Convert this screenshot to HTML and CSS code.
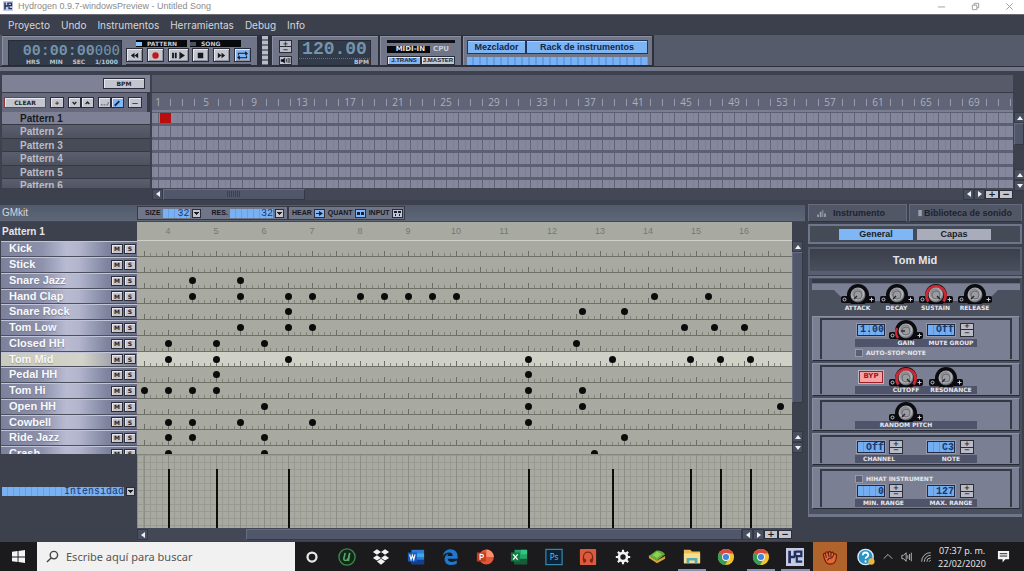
FILE: index.html
```html
<!DOCTYPE html>
<html lang="es">
<head>
<meta charset="utf-8">
<title>Hydrogen</title>
<link rel="stylesheet" href="styles.css">
</head>
<body>
<svg class="defs" aria-hidden="true">
  <defs>
    <radialGradient id="metal" cx="0.45" cy="0.4" r="0.6">
      <stop offset="0" stop-color="#c9cbd0"/><stop offset="0.45" stop-color="#85878d"/><stop offset="0.7" stop-color="#b4b6bb"/><stop offset="1" stop-color="#4a4c53"/>
    </radialGradient>
    <symbol id="feet" viewBox="0 0 34 20">
      <rect x="0" y="12" width="34" height="7" rx="2" fill="#0b0b10"/>
      <circle cx="17" cy="11" r="11" fill="#0b0b10"/>
      <circle cx="3.5" cy="15.5" r="1.5" fill="none" stroke="#c8cad2"/>
      <path d="M30.500 13.500v4M28.500 15.500h4" stroke="#c8cad2"/>
    </symbol>
    <symbol id="cap" viewBox="0 0 34 20">
      <circle cx="17" cy="11" r="7.500" fill="url(#metal)"/>
      <circle cx="17" cy="11" r="4" fill="#9a9ca2" stroke="#6a6c73"/>
    </symbol>
    <symbol id="knob" viewBox="0 0 34 20"><use href="#feet"/><use href="#cap"/><path d="M16 12l-3 3" stroke="#26272d" stroke-width="1.500"/></symbol>
    <symbol id="knob-low" viewBox="0 0 34 20"><use href="#feet"/><path d="M9 18A10 10 0 0 1 8 8" fill="none" stroke="#c62a35" stroke-width="2.500"/><use href="#cap"/><path d="M12 11h4" stroke="#26272d" stroke-width="1.500"/></symbol>
    <symbol id="knob-red" viewBox="0 0 34 20"><use href="#feet"/><path d="M9.500 17.500A9.500 9.500 0 1 1 24.500 17.500" fill="none" stroke="#c62a35" stroke-width="3"/><use href="#cap"/><path d="M18 12l3 3" stroke="#26272d" stroke-width="1.500"/></symbol>
    <symbol id="chrome" viewBox="0 0 20 20">
      <circle cx="10" cy="10" r="9" fill="#f2c230"/>
      <path d="M10 10L2.200 5.500A9 9 0 0 1 18 6H10z" fill="#dc4a3d"/>
      <path d="M10 10L2.200 5.500A9 9 0 0 0 9 19l4-7z" fill="#3a9b57"/>
      <circle cx="10" cy="10" r="4.400" fill="#f3f3f3"/><circle cx="10" cy="10" r="3.400" fill="#4285d8"/>
    </symbol>
    <symbol id="h2" viewBox="0 0 20 20">
      <rect width="20" height="20" fill="#c5cbe6"/><path d="M4 3v14M4 10h6M10 3v7" stroke="#23305e" stroke-width="3" fill="none"/><path d="M11 4h6v5h-5v6h6" stroke="#23305e" stroke-width="2.500" fill="none"/>
    </symbol>
  </defs>
</svg>

<header class="titlebar">
  <svg class="app-icon" viewBox="0 0 20 20"><use href="#h2"/></svg>
  <h1>Hydrogen 0.9.7-windowsPreview - Untitled Song</h1>
  <div class="window-buttons">
    <button aria-label="Minimizar"><svg viewBox="0 0 10 10"><path d="M1 5.500h8"/></svg></button>
    <button aria-label="Restaurar"><svg viewBox="0 0 10 10"><path d="M1.500 3.500h5v5h-5zM3.500 3.500v-2h5v5h-2"/></svg></button>
    <button aria-label="Cerrar"><svg viewBox="0 0 10 10"><path d="M1.500 1.500l7 7M8.500 1.500l-7 7"/></svg></button>
  </div>
</header>

<nav class="menu">
  <a href="#">Proyecto</a><a href="#">Undo</a><a href="#">Instrumentos</a><a href="#">Herramientas</a><a href="#">Debug</a><a href="#">Info</a>
</nav>

<section class="toolbar">
  <div class="tool transport">
    <div class="clock">
      <div class="clock-digits">00:00:00<small>000</small></div>
      <div class="clock-units"><span>HRS</span><span>MIN</span><span>SEC</span><span>1/1000</span></div>
    </div>
    <div class="transport-main">
      <div class="modes"><button class="mode on"><i></i>PATTERN</button><button class="mode"><i></i>SONG</button></div>
      <div class="keys">
        <button class="key" aria-label="Rebobinar"><svg viewBox="0 0 16 12"><path d="M8 3v6L4 6zM12 3v6L8 6z"/></svg></button>
        <button class="key" aria-label="Grabar"><svg viewBox="0 0 16 12"><circle cx="8" cy="6" r="3.500" fill="#c4161c"/></svg></button>
        <button class="key wide" aria-label="Reproducir"><svg viewBox="0 0 16 12"><path d="M1 3h2v6H1zM4 3h2v6H4zM9 2v8l6-4z"/></svg></button>
        <button class="key" aria-label="Detener"><svg viewBox="0 0 16 12"><path d="M5 3h6v6H5z"/></svg></button>
        <button class="key" aria-label="Avanzar"><svg viewBox="0 0 16 12"><path d="M4 3v6l4-3zM8 3v6l4-3z"/></svg></button>
        <button class="key blue" aria-label="Repetir"><svg viewBox="0 0 16 12"><path d="M3 6V3h8V1l3 3-3 2V4H4v2zM13 6v3H5v2L2 8l3-2v2h7V6z"/></svg></button>
      </div>
    </div>
  </div>
  <div class="meter"></div>
  <div class="tool tempo">
    <div class="tempo-buttons">
      <div class="spin"><button aria-label="Subir tempo">+</button><button aria-label="Bajar tempo">−</button></div>
      <button class="metronome" aria-label="Metrónomo"><svg viewBox="0 0 12 8"><path d="M1 3h2l2-2v6L3 5H1zM7 2v4M9 1v6M11 1v6" stroke="#23252e"/></svg></button>
    </div>
    <div class="clock bpm"><div class="bpm-digits">120.00</div><div class="clock-units end"><span>BPM</span></div></div>
  </div>
  <div class="tool status">
    <div class="cpu-bar"></div>
    <div class="status-row"><span class="midi">MIDI-IN</span><span class="cpu">CPU</span></div>
    <div class="status-row"><button class="mini blue">J.TRANS</button><button class="mini">J.MASTER</button></div>
  </div>
  <div class="tool views">
    <div class="view-row"><button>Mezclador</button><button>Rack de instrumentos</button></div>
    <div class="lcd-strip"></div>
  </div>
</section>

<section class="song">
  <div class="song-side">
    <div class="song-bpm"><button class="mini">BPM</button></div>
    <div class="song-tools">
      <button class="mini clear">CLEAR</button><button class="mini">+</button>
      <span class="pair"><button class="mini" aria-label="Bajar patrón"><svg viewBox="0 0 12 8"><path d="M4 3l2 2 2-2" fill="none" stroke="#22242c" stroke-width="1.500"/></svg></button><button class="mini" aria-label="Subir patrón"><svg viewBox="0 0 12 8"><path d="M4 5l2-2 2 2" fill="none" stroke="#22242c" stroke-width="1.500"/></svg></button></span>
      <span class="pair"><button class="mini" aria-label="Seleccionar"><svg viewBox="0 0 12 8"><path d="M2 6h8V3" fill="none" stroke="#555862" stroke-dasharray="2 1"/></svg></button><button class="mini blue" aria-label="Dibujar"><svg viewBox="0 0 12 8"><path d="M3 7l5-5" stroke="#102a66" stroke-width="2"/></svg></button></span>
      <button class="mini">—</button>
    </div>
    <ul class="pattern-list">
      <li class="selected">Pattern 1</li><li>Pattern 2</li><li>Pattern 3</li><li>Pattern 4</li><li>Pattern 5</li><li>Pattern 6</li>
    </ul>
  </div>
  <div class="song-main">
    <div class="song-tempo"></div>
    <div class="song-ruler" id="songRuler"></div>
    <div class="song-grid"><div class="song-lane"><i class="block"></i></div><div class="song-lane"></div><div class="song-lane"></div><div class="song-lane"></div><div class="song-lane"></div><div class="song-lane"></div></div>
    <div class="hscroll">
      <button class="arrow left" aria-label="Izquierda"></button><div class="thumb song-thumb"></div><span class="fill"></span>
      <button class="arrow left" aria-label="Izquierda"></button><button class="arrow right" aria-label="Derecha"></button><button class="zoom-button">+</button><button class="zoom-button">−</button>
    </div>
  </div>
  <div class="vscroll song-v">
    <button class="arrow up" aria-label="Subir"></button><div class="thumb"></div><span class="fill"></span><button class="arrow up" aria-label="Subir"></button><button class="arrow down" aria-label="Bajar"></button>
  </div>
</section>

<main class="workspace">
  <section class="pattern">
    <div class="pattern-head">
      <span class="kit">GMkit</span>
      <div class="pattern-tools">
        <label for="size">SIZE</label><span class="drop"><select id="size"><option>32</option></select></span>
        <label for="res" class="res">RES.</label><span class="drop drop-wide"><select id="res"><option>32</option></select></span>
        <span class="toggle first">HEAR<button class="tiny blue" aria-label="Hear"><svg viewBox="0 0 9 7"><path d="M1 3h3V1l4 2.500L4 6V4H1z"/></svg></button></span>
        <span class="toggle">QUANT<button class="tiny blue" aria-label="Quant"><svg viewBox="0 0 9 7"><path d="M1 2h3v3H1zM5 2h3v3H5z"/></svg></button></span>
        <span class="toggle">INPUT<button class="tiny" aria-label="Input"><svg viewBox="0 0 9 7"><path d="M1 1h3v2H1zM5 1h3v2H5zM2 4h1v2H2zM6 4h1v2H6z"/></svg></button></span>
      </div>
    </div>
    <div class="pattern-body">
      <div class="pattern-side">
        <h2>Pattern 1</h2>
        <ul class="instruments" id="instruments"></ul>
        <div class="property"><span class="drop drop-full"><select aria-label="Propiedad"><option>Intensidad</option></select></span></div>
      </div>
      <div class="pattern-main">
        <div class="beat-ruler" id="beatRuler"></div>
        <div class="lanes" id="lanes"></div>
        <div class="velocity" id="velocity"></div>
        <div class="hscroll">
          <button class="arrow left" aria-label="Izquierda"></button><span class="gap"></span><div class="thumb fill"></div>
          <button class="arrow left" aria-label="Izquierda"></button><button class="arrow right" aria-label="Derecha"></button><button class="zoom-button">+</button><button class="zoom-button">−</button>
        </div>
      </div>
      <div class="vscroll pattern-v">
        <button class="arrow up" aria-label="Subir"></button><div class="thumb fill"></div><span class="gap"></span><button class="arrow up" aria-label="Subir"></button><button class="arrow down" aria-label="Bajar"></button>
      </div>
    </div>
  </section>

  <aside class="rack">
    <div class="tabs">
      <button class="tab"><svg viewBox="0 0 10 8"><path d="M0 8V5h2v3zM3 8V2h2v6zM6 8V0h1v8zM8 8V4h2v4z"/></svg>Instrumento</button>
      <button class="tab"><svg viewBox="0 0 5 8"><path d="M0 0h4v7H0z"/></svg>Biblioteca de sonido</button>
    </div>
    <div class="subtabs"><button class="active">General</button><button>Capas</button></div>
    <h2 class="instrument-name">Tom Mid</h2>
    <div class="editor">
      <div class="rail"></div>
      <div class="adsr">
        <label class="dial"><svg><use href="#knob"/></svg><input type="range"><span>ATTACK</span></label>
        <label class="dial"><svg><use href="#knob"/></svg><input type="range"><span>DECAY</span></label>
        <label class="dial"><svg><use href="#knob-red"/></svg><input type="range"><span>SUSTAIN</span></label>
        <label class="dial"><svg><use href="#knob"/></svg><input type="range"><span>RELEASE</span></label>
      </div>
      <div class="group"><div class="group-in">
        <div class="controls">
          <input class="lcd" aria-label="Gain" value="1.00">
          <label class="dial"><svg><use href="#knob-low"/></svg><input type="range" aria-label="Gain"></label>
          <input class="lcd" aria-label="Mute group" value="Off">
          <div class="spin"><button aria-label="Más">+</button><button aria-label="Menos">−</button></div>
        </div>
        <div class="band"><span class="b">GAIN</span><span class="c">MUTE GROUP</span></div>
        <label class="check"><input type="checkbox">AUTO-STOP-NOTE</label>
      </div></div>
      <div class="group"><div class="group-in">
        <div class="controls">
          <button class="byp">BYP</button>
          <label class="dial"><svg><use href="#knob-red"/></svg><input type="range" aria-label="Cutoff"></label>
          <label class="dial reso"><svg><use href="#knob"/></svg><input type="range" aria-label="Resonance"></label>
        </div>
        <div class="band"><span class="b">CUTOFF</span><span class="c">RESONANCE</span></div>
      </div></div>
      <div class="group"><div class="group-in">
        <div class="controls"><label class="dial second"><svg><use href="#knob"/></svg><input type="range" aria-label="Random pitch"></label></div>
        <div class="band"><span class="b">RANDOM PITCH</span></div>
      </div></div>
      <div class="group"><div class="group-in roomy">
        <div class="controls">
          <input class="lcd" aria-label="Channel" value="Off"><div class="spin near"><button aria-label="Más">+</button><button aria-label="Menos">−</button></div>
          <input class="lcd" aria-label="Note" value="C3"><div class="spin"><button aria-label="Más">+</button><button aria-label="Menos">−</button></div>
        </div>
        <div class="band"><span class="a">CHANNEL</span><span class="c">NOTE</span></div>
      </div></div>
      <div class="group"><div class="group-in roomy">
        <label class="check"><input type="checkbox">HIHAT INSTRUMENT</label>
        <div class="controls">
          <input class="lcd" aria-label="Min. range" value="0"><div class="spin near"><button aria-label="Más">+</button><button aria-label="Menos">−</button></div>
          <input class="lcd" aria-label="Max. range" value="127"><div class="spin"><button aria-label="Más">+</button><button aria-label="Menos">−</button></div>
        </div>
        <div class="band"><span class="a">MIN. RANGE</span><span class="c">MAX. RANGE</span></div>
      </div></div>
    </div>
  </aside>
</main>

<footer class="taskbar">
  <button class="start" aria-label="Inicio"><svg viewBox="0 0 14 14"><path d="M0 2l6-1v6H0zM7 1l7-1v7H7zM0 8h6v5l-6-1zM7 8h7v6l-7-1z" fill="#f4f4f4"/></svg></button>
  <label class="search"><svg viewBox="0 0 14 14"><circle cx="8.500" cy="5.500" r="4"/><path d="M5.500 8.500L1 13"/></svg><input type="text" placeholder="Escribe aquí para buscar" aria-label="Buscar"></label>
  <div class="apps">
    <button aria-label="Cortana"><svg viewBox="0 0 20 20"><circle cx="10" cy="10" r="5" fill="none" stroke="#e8e8e8" stroke-width="2.500"/></svg></button>
    <button aria-label="uTorrent"><svg viewBox="0 0 20 20"><circle cx="10" cy="10" r="9" fill="#12281a" stroke="#3d8a4a" stroke-width="1.500"/><path d="M8 5.500l-1.500 6c-.5 3.500 4 3 5 0l1.500-6-1.500 9" fill="none" stroke="#58a862" stroke-width="1.800"/></svg></button>
    <button aria-label="Dropbox"><svg viewBox="0 0 20 20"><path d="M5.500 1.500L10 4.500 5.500 7.500 1 4.500zM14.500 1.500L19 4.500l-4.500 3L10 4.500zM5.500 8L10 11l-4.500 3L1 11zM14.500 8L19 11l-4.500 3L10 11zM10 12l4.500 3-4.500 3.500L5.500 15z" fill="#f2f2f2"/></svg></button>
    <button aria-label="Word"><svg viewBox="0 0 20 20"><path d="M5 2h14v16H5z" fill="#2b7cd3"/><path d="M5 6h14v4H5z" fill="#41a5ee"/><path d="M5 13h14v5H5z" fill="#103f91"/><path d="M1 5h10v10H1z" fill="#185abd"/><path d="M3 7l1.500 6L6 8l1.500 5L9 7" fill="none" stroke="#fff" stroke-width="1.200"/></svg></button>
    <button aria-label="Edge"><svg viewBox="0 0 20 20"><path d="M2 9C3 4 6 1.500 10.500 1.500c5 0 8 3.500 8 8V12H7.500c.3 4 6 4.500 10 2v3.500c-6 3-13.500 1.500-13.500-5C4 9 6 7 8.500 6 7.600 7 7.300 8 7.200 9H13c0-3-1.500-4-4-4C6 5 3.500 6.500 2 9z" fill="#1f78d0"/></svg></button>
    <button aria-label="PowerPoint"><svg viewBox="0 0 20 20"><circle cx="11.500" cy="10" r="8.300" fill="#e2573a"/><path d="M11.500 1.700A8.300 8.300 0 0 1 19.800 10h-8.300z" fill="#ff8f6b"/><path d="M1 5h10v10H1z" fill="#c43e1c"/><path d="M4.500 13V7H6.500a1.700 1.700 0 0 1 0 3.500h-2" fill="none" stroke="#fff" stroke-width="1.300"/></svg></button>
    <button aria-label="Excel"><svg viewBox="0 0 20 20"><path d="M5 2h14v16H5z" fill="#21a366"/><path d="M12 2h7v5h-7z" fill="#33c481"/><path d="M5 12h14v6H5z" fill="#185c37"/><path d="M1 5h10v10H1z" fill="#107c41"/><path d="M3.500 7l5 6M8.500 7l-5 6" stroke="#fff" stroke-width="1.400"/></svg></button>
    <button aria-label="Photoshop"><svg viewBox="0 0 20 20"><rect x="1" y="1.500" width="18" height="17" fill="#0b2538" stroke="#3c93bd" stroke-width="1.200"/><text x="10" y="13.500" class="ps">Ps</text></svg></button>
    <button aria-label="Audio"><svg viewBox="0 0 20 20"><rect x="1" y="1" width="18" height="18" rx="1" fill="#dc5a3d"/><path d="M5 13V9.500a5 5 0 0 1 10 0V13" fill="none" stroke="#7c2418" stroke-width="1.300"/><path d="M4 12c2-1 4 0 4 2s-2 3-3 2zM16 12c-2-1-4 0-4 2s2 3 3 2z" fill="#7c2418"/></svg></button>
    <button aria-label="Configuración"><svg viewBox="0 0 20 20"><circle cx="10" cy="10" r="4.500" fill="none" stroke="#f2f2f2" stroke-width="3"/><path d="M10 2v3M10 15v3M2 10h3M15 10h3M4.300 4.300l2.200 2.200M13.500 13.500l2.200 2.200M4.300 15.700l2.200-2.200M13.500 6.500l2.200-2.200" stroke="#f2f2f2" stroke-width="2.400"/></svg></button>
    <button aria-label="BlueStacks"><svg viewBox="0 0 20 20"><path d="M1 11l9 6 9-5v-3l-9 5-9-6z" fill="#d8a33a"/><path d="M1 9l8-6c3-1 8 1 10 4l-9 7z" fill="#5faf3c"/><path d="M5 8l5-4 5 3-5 4z" fill="#8fd34b"/></svg></button>
    <button class="open" aria-label="Explorador"><svg viewBox="0 0 20 20"><path d="M1 2h7l2 2h9v13H1z" fill="#e9bf55"/><path d="M1 6h18v11H1z" fill="#f8df8d"/><path d="M4 17v-6h12v6h-3v-3H7v3z" fill="#5aa9b8"/></svg></button>
    <button aria-label="Chrome"><svg><use href="#chrome"/></svg></button>
    <button class="open" aria-label="Chrome"><svg><use href="#chrome"/></svg></button>
    <button class="open" aria-label="Hydrogen"><svg><use href="#h2"/></svg></button>
    <button class="alert" aria-label="Aplicación"><svg viewBox="0 0 20 20"><path d="M3 9c-1-3 1-4 2-2 0-3 2-4 3-1 1-3 3-3 3 0 1-2 3-2 3 1 2-1 4 0 3 3 0 5-3 8-7 8s-6-4-7-9z" fill="#e56a32" stroke="#6b1d12" stroke-width="1.300"/><path d="M5 7l1 4M8 6l1 4M11 6v4M14 8l-2 3c-3 0-4 1-5 3" fill="none" stroke="#6b1d12" stroke-width="1.200"/></svg></button>
  </div>
  <div class="tray">
    <svg class="help" viewBox="0 0 20 20"><circle cx="9.500" cy="10" r="8.500" fill="#2c93c8" stroke="#d6eef8" stroke-width="1.500"/><path d="M6.500 8c0-4 6-4 6 0 0 2-3 2-3 4M9.500 14v2" fill="none" stroke="#fff" stroke-width="2"/><circle cx="16" cy="15" r="3.500" fill="#e8b93c"/></svg>
    <svg viewBox="0 0 14 14"><path d="M2 9l5-5 5 5"/></svg>
    <svg viewBox="0 0 14 14"><path d="M1 5h2l3-3v10L3 9H1zM8 5v4M10 3.500v7M12 2v10"/></svg>
    <svg viewBox="0 0 14 14"><path d="M2 12.500A10 10 0 0 1 12.500 2M5 12.500A7.500 7.500 0 0 1 12.500 5M8 12.500A4.500 4.500 0 0 1 12.500 8M10.500 12.500l2-2"/></svg>
    <div class="time"><span>07:37 p. m.</span><span>22/02/2020</span></div>
    <svg class="notice" viewBox="0 0 14 14"><path d="M1 1h12v9H9l-3 3.500V10H1z"/><path class="ink" d="M3 4h8M3 6.500h8"/></svg>
  </div>
</footer>
<script src="app.js"></script>
</body>
</html>
```

FILE: styles.css
```css
* { box-sizing: border-box; }
body {
  margin: 0; min-height: 100vh; display: flex; flex-direction: column;
  background: #3d414d; color: #e4e5ea; overflow: hidden;
  font: 10px/12px "Liberation Sans", sans-serif;
}
button, input, select { font: inherit; color: inherit; margin: 0; padding: 0; border: 0; border-radius: 0; background: none; }
button { display: flex; align-items: center; justify-content: center; }
h1, h2, ul { margin: 0; padding: 0; font-size: inherit; list-style: none; }
.defs { position: absolute; width: 0; height: 0; }
.fill { flex: 1; }

/* Title and menu */
.titlebar { height: 14px; display: flex; align-items: center; gap: 5px; padding: 0 0 2px 3px; background: #fff; color: #8c8c8c; }
.titlebar h1 { flex: 1; font: 9px/11px "Liberation Sans", sans-serif; }
.app-icon { width: 10px; height: 10px; }
.window-buttons { display: flex; gap: 25px; padding-right: 10px; }
.window-buttons svg { width: 9px; height: 9px; fill: none; stroke: #999; display: block; }
.menu { height: 21px; display: flex; align-items: center; gap: 11px; padding: 0 8px 1px; background: #3c404c; border-top: 1px solid #6a6c76; font-family: Inter, sans-serif; }
.menu a { color: #d5d6dc; text-decoration: none; }

/* Toolbar */
.toolbar { height: 36px; display: flex; padding: 0 0 1px 2px; background: #565b6b; border-bottom: 4px solid #717689; box-shadow: inset 0 -1px #2d303a; }
.tool { display: flex; background: #717588; border: solid #2d303b; border-width: 1px 2px 1px 0; box-shadow: inset 1px 1px #8b8fa2; }
.transport { width: 257px; padding: 4px 6px 0; gap: 4px; }
.clock { width: 114px; height: 26px; background: #323b49; border: 1px solid #262b35; display: flex; flex-direction: column; justify-content: space-between; color: #7494ab; }
.clock-digits { padding-top: 2px; text-align: right; font: bold 15px/15px "Liberation Mono", monospace; white-space: nowrap; }
.clock-digits small { font: 14px/15px "DejaVu Sans Mono", monospace; padding-right: 1px; }
.clock-units { display: flex; justify-content: space-between; padding: 0 3px 0 17px; font: bold 6px/6px "DejaVu Sans", sans-serif; color: #b8c4d0; }
.clock-units.end { justify-content: flex-end; padding-right: 1px; }
.transport-main { flex: 1; }
.modes { display: flex; gap: 3px; padding-left: 10px; }
.mode { width: 51px; height: 7px; justify-content: flex-start; gap: 5px; background: #08090d; color: #c9ccd4; font: bold 6px/6px "DejaVu Sans", sans-serif; }
.mode i { width: 6px; height: 4px; background: #4d515e; }
.mode.on i { background: #8cc6ff; }
.keys { display: flex; justify-content: space-between; padding-top: 1px; border-bottom: 1px solid #2b2e38; height: 18px; }
.key { width: 17px; height: 14px; background: #c3c5cf; border: 1px solid #2b2e39; box-shadow: inset 1px 1px #e8e9ef, inset -1px -1px #8e919e; }
.key.wide { width: 21px; }
.key svg { width: 15px; height: 11px; fill: #17181d; }
.blue.key, .blue.mini, .blue.tiny { background: #82b6f5; }
.meter { width: 13px; background: #8e92a3; border: solid #2d303b; border-width: 1px 4px 1px 3px; background-image: repeating-linear-gradient(#b8bbc8 0 3px, #6c7082 3px 5px); }
.tempo { width: 108px; padding: 4px 4px 0 7px; gap: 6px; }
.tempo-buttons { display: flex; flex-direction: column; gap: 3px; }
.tempo .spin { width: 13px; height: 13px; }
.metronome { width: 13px; height: 9px; background: #c3c5cf; border: 1px solid #2b2e39; }
.metronome svg { width: 11px; height: 7px; }
.bpm { width: 73px; }
.bpm-digits { text-align: center; font: bold 18px/17px "Liberation Mono", monospace; border-bottom: 1px dotted #5c7487; }
.spin { width: 14px; height: 14px; display: flex; flex-direction: column; gap: 1px; padding: 1px; background: #2b2e39; }
.spin button { flex: 1; background: #b9bbc6; color: #22242c; font: bold 7px/4px "DejaVu Sans", sans-serif; overflow: hidden; }
.status { width: 83px; flex-direction: column; gap: 3px; padding: 4px 6px 0 7px; }
.cpu-bar { height: 4px; background: #0f1117; }
.status-row { display: flex; gap: 3px; font: bold 6px/7px "DejaVu Sans", sans-serif; }
.midi { width: 43px; background: #08090d; text-align: right; padding-right: 5px; font-size: 7px; }
.cpu { font-size: 7px; color: #c9ccd4; }
.mini { min-width: 14px; background: #c3c5cf; color: #22242c; border: 1px solid #2b2e39; box-shadow: inset 1px 1px #e8e9ef; font: bold 6px/7px "DejaVu Sans", sans-serif; overflow: hidden; }
.status .status-row .mini { flex: 1; height: 9px; font: bold 6px/7px "Liberation Sans", sans-serif; }
.status-row:last-child { gap: 0; }
.views { width: 191px; flex-direction: column; gap: 3px; padding: 4px 4px 0; }
.view-row { display: flex; }
.view-row button { height: 14px; flex: 2 0 auto; background: #7db4f4; border: 1px solid #26365a; box-shadow: inset 0 1px #abd0fb; color: #14264a; font: bold 9px/12px "Liberation Sans", sans-serif; }
.view-row button:first-child { flex-grow: 1; }
.lcd-strip { height: 9px; background: repeating-linear-gradient(90deg, #78b2f5 0 5px, #639de3 5px 7px); }

/* Song editor */
.song { height: 132px; display: flex; padding: 4px 0 0 2px; }
.song-side { width: 148px; }
.song-bpm { height: 17px; display: flex; justify-content: flex-end; align-items: center; padding-right: 5px; background: #7f8296; }
.song-bpm .mini { width: 42px; height: 11px; }
.song-tools { height: 20px; display: flex; gap: 4px; align-items: center; padding: 0 2px; background: #666a7c; border-top: 1px solid #383b47; border-right: 3px solid #383b47; }
.song-tools .mini { width: 14px; min-width: 0; height: 11px; }
.song-tools .clear { width: 42px; border-color: #92343d; }
.pair { display: flex; }
.song-side .mini svg { width: 11px; height: 8px; }
.song-side .pair .mini { width: 13px; }
.pattern-list { height: 76px; overflow: hidden; }
.pattern-list li { height: 13px; padding-left: 18px; background: linear-gradient(#5b5f6d, #4e525f); border-bottom: 1px solid #353843; color: #b9bbc4; font: bold 10px/13px "Liberation Sans", sans-serif; }
.pattern-list li:nth-child(even) { height: 14px; }
.pattern-list li:nth-child(3), .pattern-list li:nth-child(5) { background: #474b58; }
.pattern-list .selected { background: #7e8195; color: #181a20; }
.song-main { flex: 1; margin-left: 2px; min-width: 0; }
.song-tempo { height: 17px; background: #575a69; }
.song-ruler { height: 20px; display: flex; overflow: hidden; background: #606476; border-top: 1px solid #383b47; border-bottom: 2px solid #7b7e92; }
.song-ruler span { flex: 0 0 48px; color: #adb0bd; font: 10px/18px "Open Sans", sans-serif; background: repeating-linear-gradient(90deg, transparent 0 6px, #979aab 6px 7px, transparent 7px 12px) 12px 6px / 36px 7px no-repeat; }
.song-ruler b { display: flex; justify-content: center; width: 12px; font-weight: normal; }
.song-grid { height: 76px; overflow: hidden; background: #5d6073; }
.song-lane { height: 13px; border: solid #5d6073; border-width: 1px 0 2px; background: repeating-linear-gradient(90deg, #85879c 0 6px, #7d8094 6px 7px, #85879c 7px 11px, #606376 11px 12px) -5px 0; padding-left: 8px; }
.song-lane:nth-child(even) { height: 14px; }
.block { display: block; width: 11px; height: 10px; background: #b90d0e; }
.hscroll { display: flex; height: 12px; align-items: center; background: #444856; }
.thumb { background: #50576b; border: 1px solid #646b80; border-color: #666d82 #343844 #343844 #666d82; }
.hscroll .thumb { height: 11px; }
.song-thumb { width: 142px; background: repeating-linear-gradient(90deg, #3a4052 0 1px, transparent 1px 2px) 50% 50% / 14px 6px no-repeat #50576b; }
.arrow { width: 11px; height: 11px; background: #4a4f60; border: 1px solid #353945; }
.arrow::before { content: ""; border: 3px solid transparent; }
.left::before { border-right: 4px solid #f0f1f5; border-left: 0; }
.right::before { border-left: 4px solid #f0f1f5; border-right: 0; }
.up::before { border-bottom: 4px solid #f0f1f5; border-top: 0; }
.down::before { border-top: 4px solid #f0f1f5; border-bottom: 0; }
.zoom-button { width: 14px; height: 9px; background: #c3c5cf; color: #181a20; border: 1px solid #2b2e39; font: bold 9px/7px "DejaVu Sans", sans-serif; }
.vscroll { width: 11px; display: flex; flex-direction: column; }
.song-v { padding: 37px 0 12px 1px; }
.song-v .thumb { height: 22px; }

/* Workspace */
.workspace { flex: 1; display: grid; grid-template-columns: minmax(0, 1fr) 216px; gap: 3px; min-height: 0; }
.pattern-head { height: 17px; margin-top: 2px; padding: 0 0 0 2px; display: flex; align-items: center; background: linear-gradient(#525b6b, #5d6778); border-bottom: 1px solid #434755; }
.kit { width: 135px; color: #d3d6dd; }
.pattern-tools { height: 14px; display: flex; align-items: center; padding: 0 1px 0 7px; background: #717588; border: 1px solid #383b47; color: #16181e; font: bold 7px/10px "Liberation Sans", sans-serif; }
.pattern-tools label { padding-right: 2px; }
.pattern-tools .res { padding-left: 11px; }
.drop { position: relative; display: block; width: 38px; height: 9px; }
.drop-wide { width: 54px; }
.drop select { appearance: none; display: block; width: calc(100% - 11px); height: 9px; background: repeating-linear-gradient(90deg, #78b2f5 0 5px, #689fe2 5px 6px); color: #1c3d71; font: 10px/9px "Liberation Mono", monospace; text-align-last: right; }
.drop::after { content: ""; position: absolute; right: 0; top: 0; width: 9px; height: 9px; background: linear-gradient(#1b1c22, #1b1c22) 50% 3px / 5px 1px no-repeat, linear-gradient(#1b1c22, #1b1c22) 50% 4px / 3px 1px no-repeat, linear-gradient(#1b1c22, #1b1c22) 50% 5px / 1px 1px no-repeat, #c3c5cf; outline: 1px solid #2b2e39; outline-offset: -1px; pointer-events: none; }
.toggle { display: flex; align-items: center; gap: 2px; height: 12px; padding-left: 3px; }
.toggle.first { margin-left: 3px; border-left: 2px solid #383b47; }
.tiny { width: 11px; height: 9px; background: #c3c5cf; border: 1px solid #2b2e39; }
.tiny svg { width: 9px; height: 7px; fill: #15203a; }
.pattern-body { display: flex; }
.pattern-side { width: 137px; }
.pattern-side h2 { height: 19px; padding-left: 2px; font: bold 10px/19px "Liberation Sans", sans-serif; }
.instruments, .lanes { height: 213px; overflow: hidden; }
.instruments li { display: flex; align-items: center; gap: 1px; height: 16px; padding: 0 1px 1px 8px; margin-left: 1px; border-bottom: 1px solid #4c4f5e; border-top: 1px solid #c1c3d8; background: linear-gradient(90deg, #7d819b, #8d91ab 30%, #b9bbd3 48%, #b3b5cd 57%, #7f839e 78%, #6a6d83); color: #f8f8fa; font: bold 11px/13px "Liberation Sans", sans-serif; text-shadow: 0 1px 1px #777b92; }
.instruments li:nth-child(4n), .lane:nth-child(4n) { height: 15px; }
.instruments li span { flex: 1; }
.instruments .picked { background: linear-gradient(90deg, #c9c9bc, #d3d3c9 60%, #9a9ba8 85%, #7b7d8d); text-shadow: 0 1px 1px #9a9a90; }
.instruments .mini { width: 12px; min-width: 12px; height: 10px; }
.property { padding: 33px 2px 0 2px; }
.drop-full { width: auto; }
.pattern-main { flex: 1; min-width: 0; background: #a8aaa2; }
.beat-ruler { height: 19px; display: flex; padding-left: 7px; border-bottom: 1px solid #cfd0c9; overflow: hidden; color: #75776f; }
.beat-ruler span { flex: 0 0 48px; text-align: center; font: 9px/19px "Liberation Sans", sans-serif; }
.lane {
  position: relative; height: 16px; border-bottom: 1px solid #6f7169;
  background: repeating-linear-gradient(90deg, #6a6c65 0 1px, transparent 1px 24px) 7px 100% / calc(100% - 13px) 5px no-repeat,
    repeating-linear-gradient(90deg, #83857d 0 1px, transparent 1px 6px) 7px 100% / calc(100% - 13px) 3px no-repeat, #a8aaa2;
}
.lane.picked { background-color: #cfd0c6; }
.note { position: absolute; top: 4px; width: 7px; height: 7px; margin-left: -3px; border-radius: 50%; background: #0b0b0b; }
.velocity {
  position: relative; height: 74px; border-top: 1px solid #85877f;
  background: repeating-linear-gradient(90deg, #8c8e86 0 1px, transparent 1px 24px) 7px 0, repeating-linear-gradient(90deg, #999b93 0 1px, transparent 1px 6px) 7px 0, repeating-linear-gradient(#999b93 0 1px, transparent 1px 7px), #a8aaa2;
}
.bar { position: absolute; bottom: 0; width: 2px; height: 59px; background: #0d0e0b; }
.pattern-main .hscroll { height: 13px; }
.pattern-main .gap { width: 98px; }
.pattern-v { margin: 19px 2px 0 0; width: 11px; height: 212px; }
.pattern-v .gap { height: 28px; }

/* Instrument rack */
.rack { padding: 1px 2px 0 0; }
.tabs { display: grid; grid-template-columns: 99px 1fr; gap: 2px; }
.tab { height: 18px; gap: 7px; justify-content: flex-start; padding-left: 8px; background: #515767; border: 1px solid #656b7d; border-bottom-color: #2e323d; color: #1f222a; font: bold 9px/12px "Liberation Sans", sans-serif; white-space: nowrap; }
.tab:last-child { gap: 1px; }
.tab svg { height: 7px; width: 9px; fill: #9ba0ad; }
.tab:last-child svg { width: 5px; }
.subtabs { display: flex; justify-content: center; gap: 4px; height: 20px; margin-top: 2px; padding: 3px; background: #454a57; border: 2px solid #70768a; }
.subtabs button { width: 74px; height: 11px; background: #a9acbb; color: #1b1d24; font: bold 9px/11px "Liberation Sans", sans-serif; }
.subtabs .active { background: #7fb6f6; }
.instrument-name { height: 28px; margin-top: 3px; text-align: center; font: bold 11px/23px "Liberation Sans", sans-serif; background: linear-gradient(#3b3f4b, #4a4f5d); border: 2px solid #595f70; border-bottom-width: 4px; }
.editor { margin-top: 1px; padding: 0 2px 3px 3px; border: 2px solid #70768a; border-width: 2px 0 3px 1px; background: #4b505e; }
.rail { height: 5px; margin-top: 1px; background: #363a46; border-bottom: 1px solid #646a7c; }
.adsr { position: relative; display: flex; justify-content: center; height: 32px; gap: 5px; z-index: 0; }
.adsr::before { content: ""; position: absolute; z-index: -1; inset: 0 0 15px; background: #7c8094; clip-path: polygon(0 0, 100% 0, 100% 6px, calc(100% - 22px) 6px, calc(100% - 30px) 14px, calc(100% - 30px) 100%, 30px 100%, 30px 14px, 22px 6px, 0 6px); }
.dial { position: relative; width: 34px; height: 19px; display: block; }
.dial svg { display: block; width: 34px; height: 20px; }
.dial input { position: absolute; inset: 0; width: 100%; height: 19px; opacity: 0; }
.dial span { display: flex; justify-content: center; }
.dial span, .band, .check { font: bold 6px/8px "DejaVu Sans", sans-serif; color: #e6e7ec; white-space: nowrap; }
.group { margin-bottom: 2px; padding: 1px 7px; background: #7b7f93; border: 1px solid #272a35; border-color: #8c90a2 #393c49 #272a35 #8c90a2; }
.group-in { padding: 0 33px; border: solid #353946; border-width: 2px 2px 0; }
.group-in.roomy { padding-top: 3px; }
.roomy .band { margin-top: 1px; }
.roomy .check { height: 10px; padding-bottom: 1px; }
.controls { display: grid; grid-template-columns: 32px 38px 32px 20px; align-items: center; justify-items: center; }
.near { justify-self: start; margin-left: 2px; }
.reso { grid-column: 3 / 5; justify-self: start; margin-left: 4px; }
.second { grid-column: 2; }
.lcd { width: 28px; height: 12px; border: 1px solid #1f2a44; outline: 1px solid #9498a9; background: repeating-linear-gradient(90deg, #74aef2 0 5px, #5f97da 5px 6px); color: #17386d; text-align: right; font: bold 10px/10px "Liberation Mono", monospace; }
.byp { width: 24px; height: 12px; background: #f5a3a3; border: 1px solid #9c1f28; outline: 1px solid #b4b6c2; color: #a5141e; font: bold 7px/9px "DejaVu Sans", sans-serif; }
.band { display: grid; grid-template-columns: 32px 38px 52px; justify-items: center; background: #50546a; }
.band .a { grid-column: 1 / 3; grid-row: 1; justify-self: start; padding-left: 8px; }
.band .b { grid-column: 2; grid-row: 1; justify-self: center; }
.band .c { grid-column: 3; grid-row: 1; }
.check { display: flex; align-items: center; gap: 3px; height: 12px; }
.check input { appearance: none; width: 8px; height: 8px; background: #5b5f74; border: 1px solid #9599aa; }

/* Taskbar */
.taskbar { height: 29px; display: flex; background: #1b1b1d; }
.start { width: 37px; }
.start svg { width: 13px; height: 13px; }
.search { width: 258px; display: flex; align-items: center; gap: 7px; padding-left: 9px; background: #f1f1f2; }
.search svg { width: 13px; height: 13px; fill: none; stroke: #444; stroke-width: 1.500; }
.search input { flex: 1; font: 11px/16px "Noto Sans", sans-serif; color: #444; outline: 0; }
.search input::placeholder { color: #555; opacity: 1; }
.apps { width: 552px; display: grid; grid-template-columns: repeat(16, 1fr); }
.apps svg { width: 18px; height: 18px; }
.apps .open { border-bottom: 2px solid #8e8fae; padding-top: 2px; margin: 0 3px; }
.apps .alert { background: #b0642b; }
.ps { font: 9px "Open Sans", sans-serif; fill: #6fc3ea; text-anchor: middle; }
.tray { flex: 1; display: flex; align-items: center; padding-left: 10px; gap: 7px; }
.tray svg { width: 12px; height: 12px; fill: none; stroke: #c9c9c9; }
.tray .help { width: 18px; height: 18px; stroke: none; }
.time { display: flex; flex-direction: column; align-items: center; width: 46px; font: 9px/13px "Open Sans", sans-serif; color: #ececec; white-space: nowrap; }
.tray .notice { width: 13px; height: 13px; margin-left: 5px; fill: #f4f4f4; stroke: none; }
.tray .ink { stroke: #1b1b1d; }
```

FILE: app.js
```js
const BEAT = 48;
const FIRST_BEAT = 4;
const ORIGIN = 31;

// Each note is a position in beats.
const instruments = [
  ["Kick", []],
  ["Stick", []],
  ["Snare Jazz", [4.5, 5.5]],
  ["Hand Clap", [4.5, 5.5, 6.5, 7, 8, 8.5, 9, 9.5, 10, 14.125, 15.25]],
  ["Snare Rock", [6.5, 12.625, 13.5]],
  ["Tom Low", [5.5, 6.5, 7, 14.75, 15.375, 16]],
  ["Closed HH", [4, 5, 6, 12.5]],
  ["Tom Mid", [4, 5, 6.5, 11.5, 13.25, 14.875, 15.5, 16.125]],
  ["Pedal HH", [5, 11.5]],
  ["Tom Hi", [3.5, 4, 4.5, 5, 11.5, 12.625]],
  ["Open HH", [6, 11.5, 12.625, 16.75]],
  ["Cowbell", [4, 4.5, 5.5, 7, 11.5]],
  ["Ride Jazz", [4, 4.5, 6, 13.5]],
  ["Crash", [4, 6, 12.875]]
];
const picked = "Tom Mid";
const left = beat => `left:${ORIGIN + (beat - FIRST_BEAT) * BEAT}px`;
const byId = id => document.getElementById(id);

byId("songRuler").innerHTML = Array.from({ length: 18 }, (_, i) => `<span><b>${i * 4 + 1}</b></span>`).join("");
byId("beatRuler").innerHTML = Array.from({ length: 13 }, (_, i) => `<span>${i + FIRST_BEAT}</span>`).join("");
byId("instruments").innerHTML = instruments.map(([name]) =>
  `<li class="${name === picked ? "picked" : ""}"><span>${name}</span><button class="mini">M</button><button class="mini">S</button></li>`).join("");
byId("lanes").innerHTML = instruments.map(([name, notes]) =>
  `<div class="lane ${name === picked ? "picked" : ""}">${notes.map(n => `<i class="note" style="${left(n)}"></i>`).join("")}</div>`).join("");
byId("velocity").innerHTML = instruments.find(([name]) => name === picked)[1]
  .map(n => `<i class="bar" style="${left(n)}"></i>`).join("");
```
